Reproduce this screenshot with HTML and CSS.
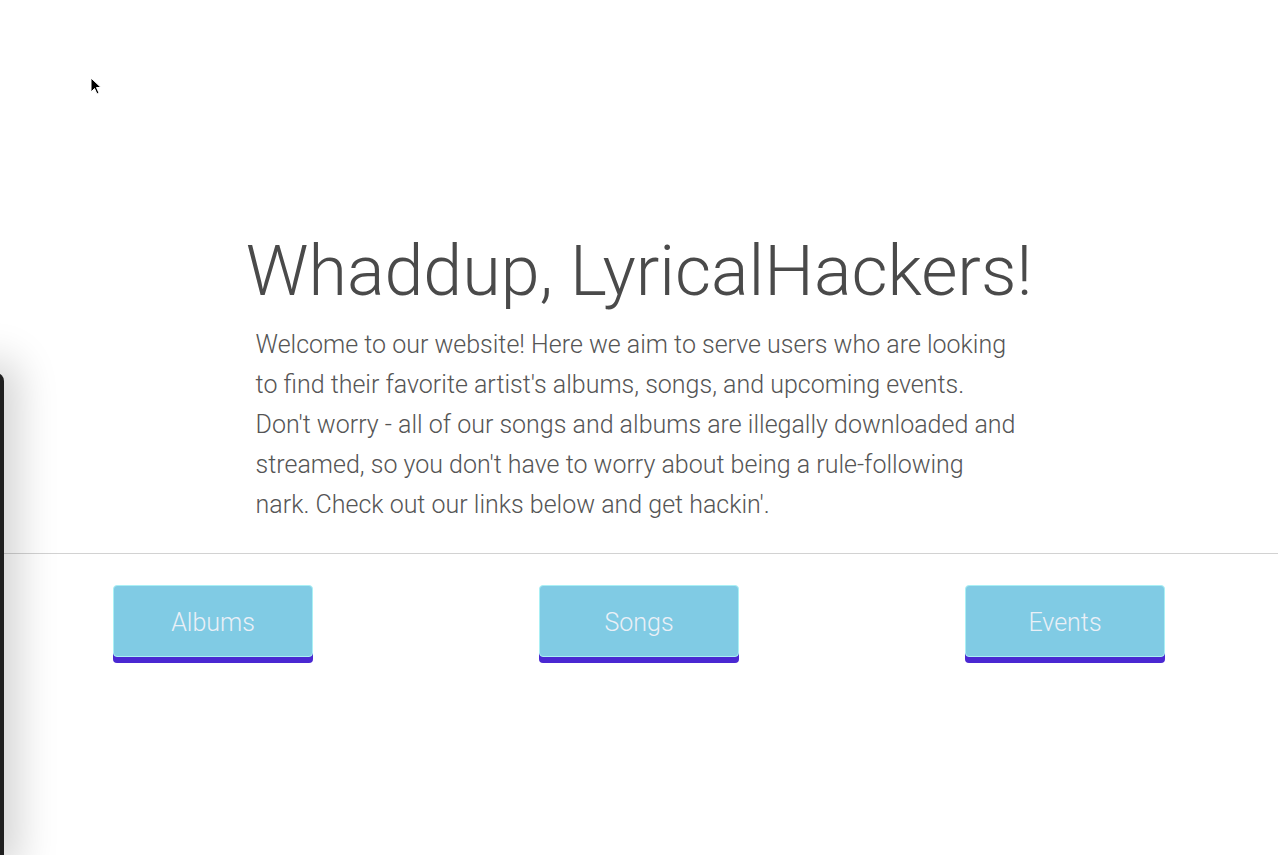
FILE: index.html
```html
<!DOCTYPE html>
<html lang="en">
<head>
<meta charset="utf-8">
<title>LyricalHackers</title>
<link rel="stylesheet" href="styles.css">
</head>
<body>
<div class="backdrop-window"></div>
<svg class="cursor" width="12" height="20" viewBox="0 0 12 20"><path d="M1 1 L1 15 L4.5 11.5 L7 17 L9 16 L6.5 10.5 L11 10.5 Z" fill="#000" stroke="#fff" stroke-width="1"/></svg>
<main class="hero">
  <h1 class="title">Whaddup, LyricalHackers!</h1>
  <p class="intro">Welcome to our website! Here we aim to serve users who are looking to find their favorite artist's albums, songs, and upcoming events. Don't worry - all of our songs and albums are illegally downloaded and streamed, so you don't have to worry about being a rule-following nark. Check out our links below and get hackin'.</p>
</main>
<hr class="divider">
<nav class="links">
  <div class="link-cell"><a class="btn" href="#">Albums</a></div>
  <div class="link-cell"><a class="btn" href="#">Songs</a></div>
  <div class="link-cell"><a class="btn" href="#">Events</a></div>
</nav>
</body>
</html>
```
FILE: styles.css
```css
html, body {
  margin: 0;
  padding: 0;
  background: #fff;
}
body {
  font-family: Roboto, "Liberation Sans", sans-serif;
  font-weight: 300;
  color: #4a4a4a;
  height: 855px;
  position: relative;
  overflow: hidden;
}
.backdrop-window {
  position: absolute;
  left: -20px;
  top: 373px;
  width: 24px;
  height: 482px;
  background: #1f1f1f;
  border-radius: 8px 8px 0 0;
  box-shadow: 0 0 40px 14px rgba(0,0,0,0.18);
  z-index: 5;
}
.cursor {
  position: absolute;
  left: 90px;
  top: 77px;
  z-index: 10;
}
.hero {
  padding-top: 223px;
}
.title {
  margin: 0;
  text-align: center;
  font-weight: 300;
  font-size: 70px;
  line-height: 96px;
  color: #4a4a4a;
  letter-spacing: 0;
}
.intro {
  width: 60%;
  margin: 6px auto 0;
  font-size: 25px;
  line-height: 40px;
  color: #555;
}
.divider {
  margin: 28px 0 0;
  border: 0;
  border-top: 1px solid #d2d2d2;
  height: 0;
}
.links {
  display: grid;
  grid-template-columns: repeat(3, 1fr);
  padding-top: 31px;
}
.link-cell {
  display: flex;
  justify-content: center;
}
.btn {
  display: flex;
  align-items: center;
  justify-content: center;
  box-sizing: border-box;
  width: 200px;
  height: 72px;
  padding-top: 2px;
  background: #80cbe4;
  border: 1px solid #aaf0f5;
  border-radius: 4px;
  box-shadow: 0 6px 0 #4a28d2;
  color: #eaf0f7;
  font-size: 25px;
  font-weight: 300;
  text-decoration: none;
}
```
